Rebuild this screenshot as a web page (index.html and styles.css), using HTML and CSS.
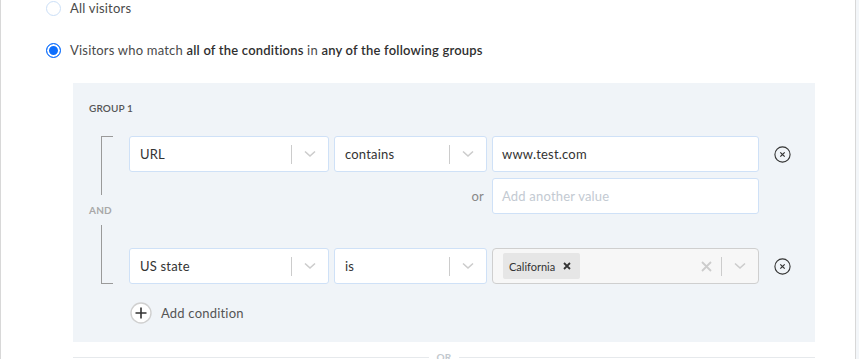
FILE: index.html
```html
<!DOCTYPE html>
<html>
<head>
<meta charset="utf-8">
<link rel="stylesheet" href="styles.css">
</head>
<body>
<div class="page">
  <div class="option">
    <span class="radio"></span>
    <span class="opt-label">All visitors</span>
  </div>
  <div class="option second">
    <span class="radio on"></span>
    <span class="opt-label">Visitors who match <b>all of the conditions</b> in <b>any of the following groups</b></span>
  </div>

  <div class="group">
    <div class="group-title">GROUP 1</div>
    <div class="group-body">
      <div class="bracket">
        <div class="bline top"></div>
        <div class="and">AND</div>
        <div class="bline bottom"></div>
      </div>
      <div class="conditions">
        <div class="cond">
          <div class="cond-row">
            <div class="select field-a"><span class="sel-text">URL</span><span class="sep"></span><span class="chev"><svg width="12" height="8" viewBox="0 0 12 8"><path d="M1 1.5 L6 6 L11 1.5" fill="none" stroke="#cccccc" stroke-width="1.6"/></svg></span></div>
            <div class="select field-b"><span class="sel-text">contains</span><span class="sep"></span><span class="chev"><svg width="12" height="8" viewBox="0 0 12 8"><path d="M1 1.5 L6 6 L11 1.5" fill="none" stroke="#cccccc" stroke-width="1.6"/></svg></span></div>
            <div class="input field-c">www.test.com</div>
            <span class="remove"><svg width="17" height="17" viewBox="0 0 17 17"><circle cx="8.5" cy="8.5" r="7.6" fill="none" stroke="#333" stroke-width="1.1"/><path d="M6.3 6.3 L10.7 10.7 M10.7 6.3 L6.3 10.7" stroke="#333" stroke-width="1.2"/></svg></span>
          </div>
          <div class="cond-row or-row">
            <span class="or">or</span>
            <div class="input field-c placeholder">Add another value</div>
          </div>
        </div>
        <div class="cond second-cond">
          <div class="cond-row">
            <div class="select field-a"><span class="sel-text">US state</span><span class="sep"></span><span class="chev"><svg width="12" height="8" viewBox="0 0 12 8"><path d="M1 1.5 L6 6 L11 1.5" fill="none" stroke="#cccccc" stroke-width="1.6"/></svg></span></div>
            <div class="select field-b"><span class="sel-text">is</span><span class="sep"></span><span class="chev"><svg width="12" height="8" viewBox="0 0 12 8"><path d="M1 1.5 L6 6 L11 1.5" fill="none" stroke="#cccccc" stroke-width="1.6"/></svg></span></div>
            <div class="multi field-c">
              <span class="chip">California <span class="chip-x"><svg width="8" height="8" viewBox="0 0 8 8"><path d="M1 1 L7 7 M7 1 L1 7" stroke="#333" stroke-width="1.8"/></svg></span></span>
              <span class="multi-space"></span>
              <span class="clear"><svg width="11" height="11" viewBox="0 0 11 11"><path d="M1 1 L10 10 M10 1 L1 10" stroke="#cccccc" stroke-width="1.8"/></svg></span>
              <span class="sep gray"></span>
              <span class="chev"><svg width="12" height="8" viewBox="0 0 12 8"><path d="M1 1.5 L6 6 L11 1.5" fill="none" stroke="#cccccc" stroke-width="1.6"/></svg></span>
            </div>
            <span class="remove"><svg width="17" height="17" viewBox="0 0 17 17"><circle cx="8.5" cy="8.5" r="7.6" fill="none" stroke="#333" stroke-width="1.1"/><path d="M6.3 6.3 L10.7 10.7 M10.7 6.3 L6.3 10.7" stroke="#333" stroke-width="1.2"/></svg></span>
          </div>
        </div>
      </div>
    </div>
    <div class="add">
      <span class="add-icon"><svg width="22" height="22" viewBox="0 0 22 22"><circle cx="11" cy="11" r="10" fill="#fff" stroke="#d0d0d0" stroke-width="1.4"/><path d="M11 5.5 V16.5 M5.5 11 H16.5" stroke="#333" stroke-width="1.6"/></svg></span>
      <span class="add-text">Add condition</span>
    </div>
  </div>

  <div class="or-sep"><span class="or-line"></span><span class="or-text">OR</span><span class="or-line"></span></div>
</div>
</body>
</html>
```

FILE: styles.css
```css
* { box-sizing: border-box; }
html, body { margin: 0; padding: 0; background: #f3f6f9; }
body {
  font-family: "Lato", "Open Sans", sans-serif;
  color: #4a4a4a;
  width: 859px;
  height: 359px;
  overflow: hidden;
  letter-spacing: 0.2px;
}
.page {
  width: 856px;
  height: 380px;
  background: #fff;
  border-left: 1px solid #d8d8d8;
  border-right: 1px solid #d8d8d8;
  padding-left: 45px;
}
.option {
  display: flex;
  align-items: center;
  height: 16px;
  gap: 9px;
}
.option.second { margin-top: 26px; }
.radio {
  width: 15px;
  height: 15px;
  border-radius: 50%;
  border: 1px solid #cbdff7;
  background: #fff;
  flex: none;
}
.radio.on {
  background: #0d6efd;
  border: 1px solid #0d6efd;
  box-shadow: inset 0 0 0 2px #fff;
}
.opt-label {
  font-size: 13px;
  color: #4a4a4a;
}
.opt-label b { font-weight: 600; color: #2f2f2f; }

.group {
  margin-top: 25px;
  margin-left: 27px;
  width: 742px;
  background: #f0f4f8;
  padding: 18px 0 18px 16px;
}
.group-title {
  font-size: 10px;
  font-weight: 600;
  color: #555;
  line-height: 14px;
  letter-spacing: 0.1px;
}
.group-body {
  display: flex;
  margin-top: 21px;
}
.bracket {
  width: 40px;
  display: flex;
  flex-direction: column;
  flex: none;
}
.bline {
  flex: 1;
  margin-left: 12px;
  width: 12px;
  border-left: 1px solid #9a9a9a;
}
.bline.top { border-top: 1px solid #9a9a9a; }
.bline.bottom { border-bottom: 1px solid #9a9a9a; }
.and {
  height: 30px;
  line-height: 30px;
  font-size: 10px;
  font-weight: 700;
  color: #a8a8a8;
}
.conditions { display: flex; flex-direction: column; gap: 34px; }
.cond { display: flex; flex-direction: column; gap: 6px; }
.cond-row {
  display: flex;
  align-items: center;
  gap: 5px;
  height: 36px;
}
.select, .input, .multi {
  height: 36px;
  background: #fff;
  border: 1px solid #cfe1f7;
  border-radius: 3px;
  display: flex;
  align-items: center;
  font-size: 13px;
  color: #333;
  flex: none;
}
.field-a { width: 200px; }
.field-b { width: 153px; }
.field-c { width: 267px; }
.sel-text { flex: 1; padding-left: 10px; }
.sep {
  width: 1px;
  height: 19px;
  background: #cccccc;
  flex: none;
}
.chev {
  width: 36px;
  display: flex;
  justify-content: center;
  align-items: center;
  flex: none;
}
.input { padding-left: 9px; }
.placeholder { color: #c3cad2; }
.remove {
  width: 17px;
  height: 17px;
  margin-left: 10px;
  display: flex;
}
.or-row .or {
  width: 358px;
  text-align: right;
  padding-right: 3px;
  font-size: 13px;
  color: #888;
}
.multi {
  background: #f7f7f7;
  border-color: #cfcfcf;
  border-radius: 4px;
  padding-left: 10px;
}
.chip {
  background: #e6e6e6;
  border-radius: 2px;
  height: 26px;
  width: 77px;
  display: flex;
  align-items: center;
  padding-left: 6px;
  font-size: 11px;
  color: #333;
  gap: 8px;
  letter-spacing: 0;
}
.chip-x { display: flex; }
.multi-space { flex: 1; }
.clear {
  width: 30px;
  display: flex;
  justify-content: center;
  align-items: center;
}

.add {
  display: flex;
  align-items: center;
  margin-top: 18px;
  margin-left: 41px;
  gap: 9px;
  height: 22px;
}
.add-icon { width: 22px; height: 22px; display: flex; }
.add-text { font-size: 13px; color: #555; }

.or-sep {
  margin-left: 27px;
  width: 742px;
  display: flex;
  align-items: center;
  margin-top: 9px;
  gap: 8px;
}
.or-line { flex: 1; height: 1px; background: #e6e9ec; }
.or-text { font-size: 10px; font-weight: 700; color: #c2c8ce; }
```
